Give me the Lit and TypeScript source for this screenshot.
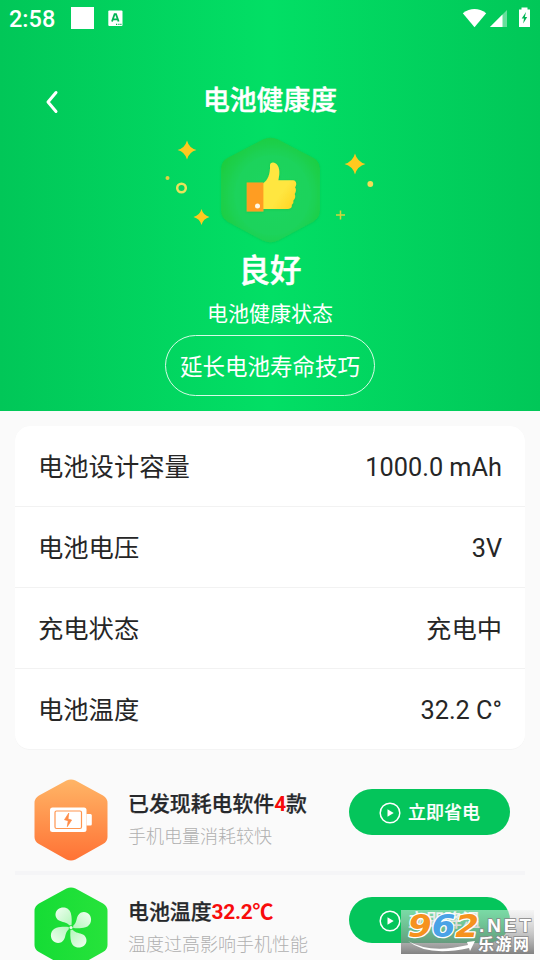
import { LitElement, html, css, svg } from "lit";
import { customElement, property } from "lit/decorators.js";

const spark = (x: number, y: number, r: number) => {
  const k = r * 0.3;
  return svg`<path fill="#ffc91f" d="M${x} ${y - r}Q${x + k * 0.7} ${y - k * 0.7} ${x + r} ${y}Q${x + k * 0.7} ${y + k * 0.7} ${x} ${y + r}Q${x - k * 0.7} ${y + k * 0.7} ${x - r} ${y}Q${x - k * 0.7} ${y - k * 0.7} ${x} ${y - r}Z"/>`;
};

@customElement("status-bar")
class StatusBar extends LitElement {
  static styles = css`
    :host { display: flex; align-items: center; height: 36px; padding: 0 8px 0 9px; color: #fff; }
    .clock { font: 500 23.5px/36px Roboto, sans-serif; width: 62px; padding-top: 1px; box-sizing: border-box; height: 36px; }
    .square { width: 23px; height: 22px; background: #fff; }
    .app { margin-left: 14px; }
    .system { margin-left: auto; }
    svg { display: block; }
  `;
  render() {
    return html`
      <span class="clock">2:58</span>
      <span class="square"></span>
      <svg class="app" width="15" height="17" viewBox="0 0 15 17">
        <rect x="0.3" y="0.5" width="14.2" height="15.5" rx="1" fill="#fff"/>
        <path d="M4 11.5L6.6 4.2H8L10.6 11.5M5 9.4H9.6" fill="none" stroke="#02b455" stroke-width="1.8"/>
        <path d="M8 14.3h1.2M10.3 14.3h1.2M12.3 14.3h1.2" stroke="#02b455" stroke-width="1.2"/>
      </svg>
      <svg class="system" width="70" height="36" viewBox="462 0 70 36">
        <path d="M462.8 13.2Q474.500 4.800 486.200 13.200L474.500 27.200Z" fill="#fff"/>
        <path d="M507 10V27H490Z" fill="#fff" opacity=".4"/>
        <path d="M502.500 14.500V27H490Z" fill="#fff"/>
        <path d="M521.500 7.500h6v2h2.500v17.500h-11V9.500h2.500Z" fill="#fff"/>
        <path d="M526 12l-4.300 6.600h2.300l-.8 5 4-6.600h-2.300Z" fill="#02b455"/>
      </svg>`;
  }
}

@customElement("health-badge")
class HealthBadge extends LitElement {
  static styles = css`:host, svg { display: block; }`;
  render() {
    return html`
      <svg width="240" height="125" viewBox="150 125 240 125">
        <defs>
          <radialGradient id="hex" cx=".52" cy=".55" r=".58">
            <stop offset="0" stop-color="#1bd561"/>
            <stop offset=".65" stop-color="#1cd35b"/>
            <stop offset="1" stop-color="#1ccd3f"/>
          </radialGradient>
          <linearGradient id="hand" x1="0" y1="0" x2="1" y2="1">
            <stop offset=".6" stop-color="#ffe640"/>
            <stop offset="1" stop-color="#ffd21f"/>
          </linearGradient>
          <filter id="soft" x="-20%" y="-20%" width="140%" height="140%">
            <feDropShadow dx="0" dy="0.500" stdDeviation="1" flood-color="#08b83c" flood-opacity=".5"/>
          </filter>
        </defs>
        <path filter="url(#soft)" fill="url(#hex)" d="M263 139.500Q270.500 135.800 278 139.500L313.500 158Q319.800 161.500 319.800 168.500V210.500Q319.800 217.500 313.500 221.500L278 240.500Q270.500 244 263 240.500L227.500 221.500Q221.200 217.500 221.200 210.500V168.500Q221.200 161.500 227.500 158Z"/>
        <g filter="url(#soft)">
          <path fill="url(#hand)" d="M263 183.500C268 180 270.300 174 270 165.500C270 162.600 273 162 275.300 163.200C279.500 165.500 280.300 172 278.300 180.200H293Q296.300 180.500 296.200 184.200Q296 186.200 295 187.300Q297 190 294.700 194Q296.200 197.500 293.300 200.500Q294 203 291.800 204.800Q292.300 208.800 288 209H263Z"/>
          <rect x="246.700" y="182.500" width="16.700" height="29" fill="#ff9d22"/>
          <circle cx="257.500" cy="206" r="2.500" fill="#fff8e6"/>
        </g>
        ${spark(187, 150, 9.500)}${spark(201.500, 217, 8)}${spark(355, 164, 10.500)}
        <circle cx="167.500" cy="178" r="2" fill="#e4d040"/>
        <circle cx="181.500" cy="188" r="4.300" fill="none" stroke="#e9e35c" stroke-width="2.500"/>
        <circle cx="370.300" cy="184" r="2.900" fill="#f3dc58"/>
        <path d="M340.500 210.500v9M336 215h9" stroke="#d6d33c" stroke-width="1.500"/>
      </svg>`;
  }
}

@customElement("info-row")
class InfoRow extends LitElement {
  @property() label = "";
  @property() value = "";
  static styles = css`
    :host { display: flex; justify-content: space-between; align-items: center; height: 80px; padding: 3px 23px 0; box-sizing: border-box; color: #262626; font-size: 25.3px; line-height: 40px; }
  `;
  render() {
    return html`<span>${this.label}</span><span>${this.value}</span>`;
  }
}

@customElement("tip-row")
class TipRow extends LitElement {
  @property() kind = "";
  @property() before = "";
  @property() mark = "";
  @property() after = "";
  @property() note = "";
  @property() action = "";
  static styles = css`
    :host { display: flex; align-items: center; height: 108px; padding: 0 30px 0 34px; box-sizing: border-box; }
    svg { display: block; flex: none; }
    .text { margin-left: 20px; flex: 1; white-space: nowrap; }
    .title { font-size: 20.9px; line-height: 32px; font-weight: 500; color: #26282b; -webkit-text-stroke: 0.25px #26282b; }
    .mark { color: #f80b0b; font-weight: 700; letter-spacing: -0.25px; -webkit-text-stroke: 0; }
    .note { font-size: 18px; line-height: 32px; padding-top: 1px; color: #b0b0b0; font-weight: 300; }
    .action { display: flex; align-items: center; box-sizing: border-box; width: 161px; height: 46px; margin-bottom: 16px; padding: 1px 0 0 30px; gap: 7px; border-radius: 23px; border: 0; background: #04c55b; color: #fff; font: 500 18px/26px Roboto, "Noto Sans CJK SC", sans-serif; -webkit-text-stroke: 0.2px #fff; }
  `;
  private glyph() {
    return this.kind === "battery"
      ? svg`<rect x="16" y="28.500" width="36.500" height="24.500" rx="2.500" fill="#fff"/>
          <path d="M52.500 35h4q1.300 0 1.300 1.500v8.500q0 1.500-1.300 1.500h-4Z" fill="#fff"/>
          <rect x="21" y="32" width="26.500" height="17.500" rx="1.500" fill="none" stroke="#ff9650" stroke-width="1.200"/>
          <path d="M34.800 34l-4.300 6.700 3.700 1-.9 6 4.300-6.700-3.600-1Z" fill="#ff8b46" stroke="#ff8b46" stroke-width=".7"/>`
      : svg`${[0, 90, 180, 270].map(
          (a) => svg`<path transform="rotate(${a} 37 40.500)" fill="url(#blade)" d="M35.300 38.300C32 34.500 28.500 35.500 25 33.500C20.500 31 20.500 25 24 22.200C28 19 35 20 36.800 26C38 30.500 37.800 35 37.500 38.300Z"/>`
        )}<circle cx="37" cy="40.500" r="1.600" fill="#e5ffe8"/>`;
  }
  render() {
    const warm = this.kind === "battery";
    return html`
      <svg width="74" height="82" viewBox="0 0 74 82">
        <defs>
          <linearGradient id="bg" x1="0" y1="0" x2=${warm ? "0" : "1"} y2=${warm ? "1" : "0"}>
            <stop offset="0" stop-color=${warm ? "#ffb566" : "#15dc35"}/>
            <stop offset="1" stop-color=${warm ? "#ff7235" : "#27e33b"}/>
          </linearGradient>
          <linearGradient id="blade" x1="0" y1="0" x2="1" y2="1">
            <stop offset="0" stop-color="#f1fff2"/>
            <stop offset="1" stop-color="#b4f6bb"/>
          </linearGradient>
        </defs>
        <path fill="url(#bg)" d="M32.500 1.500Q37 -.5 41.500 1.500L69 16.500Q73.500 19 73.500 24V58Q73.500 62.500 69 65L41.500 80.500Q37 82.500 32.500 80.500L5 65Q.5 62.500 .5 58V24Q.5 19 5 16.500Z"/>
        ${this.glyph()}
      </svg>
      <div class="text">
        <div class="title">${this.before}<span class="mark">${this.mark}</span>${this.after}</div>
        <div class="note">${this.note}</div>
      </div>
      <button class="action">
        <svg width="22" height="22" viewBox="0 0 22 22">
          <circle cx="11" cy="11" r="9.800" fill="none" stroke="#fff" stroke-width="1.500"/>
          <path d="M8.500 7.300L14.700 11L8.500 14.700Z" fill="#fff"/>
        </svg>
        <span>${this.action}</span>
      </button>`;
  }
}

@customElement("site-mark")
class SiteMark extends LitElement {
  static styles = css`
    :host, svg { display: block; }
    .num { font: italic 700 32px "DejaVu Sans", "Liberation Sans", sans-serif; paint-order: stroke; stroke: #fff; stroke-width: 2.5px; stroke-linejoin: round; }
    .net { font: 700 19px "Liberation Sans", sans-serif; fill: #fff; paint-order: stroke; stroke: #888; stroke-width: 1.5px; }
    .cn { font: 700 16px "Noto Sans CJK SC", sans-serif; fill: #fff; paint-order: stroke; stroke: #888; stroke-width: 1.5px; }
  `;
  render() {
    return html`
      <svg width="133" height="44" viewBox="401 910 133 44">
        <defs>
          <linearGradient id="shade" x1="0" y1="0" x2="0" y2="1">
            <stop offset="0" stop-color="#f0f0f0" stop-opacity=".5"/>
            <stop offset=".5" stop-color="#aaa" stop-opacity=".6"/>
            <stop offset="1" stop-color="#6c6c6c" stop-opacity=".85"/>
          </linearGradient>
        </defs>
        <rect x="401" y="910" width="133" height="44" fill="url(#shade)"/>
        <text class="num" x="408" y="937" textLength="71" lengthAdjust="spacingAndGlyphs"><tspan fill="#f6921e">9</tspan><tspan fill="#4aa3e6">6</tspan><tspan fill="#f6921e">2</tspan></text>
        <path d="M408 941Q430 954 468 945L467 942L475 941L470 951L469 948Q428 957 408 941Z" fill="#fff"/>
        <text class="net" x="479" y="931.500" textLength="52" lengthAdjust="spacing">.NET</text>
        <text class="cn" x="478" y="949.500" textLength="51" lengthAdjust="spacing">乐游网</text>
      </svg>`;
  }
}

@customElement("app-root")
class AppRoot extends LitElement {
  static styles = css`
    :host { display: block; position: relative; height: 960px; overflow: hidden; background: #fafafa; font-family: Roboto, "Noto Sans CJK SC", sans-serif; }
    .hero { height: 411px; box-sizing: border-box; background: linear-gradient(90deg, #01c758, #02df65 50%, #01c758); color: #fff; display: flex; flex-direction: column; align-items: center; }
    status-bar { align-self: stretch; }
    .bar { align-self: stretch; display: grid; grid-template-columns: 104px 1fr 104px; align-items: center; height: 40px; margin-top: 44px; }
    .bar svg { display: block; margin: 3px 0 0 44px; }
    .title { margin: 0; padding-top: 1px; text-align: center; font-size: 26.8px; line-height: 40px; font-weight: 500; -webkit-text-stroke: 0.4px #fff; }
    health-badge { margin-top: 5px; }
    .grade { font-size: 31.5px; line-height: 40px; font-weight: 500; padding-top: 2px; -webkit-text-stroke: 0.5px #fff; }
    .state { font-size: 21px; line-height: 30px; margin-top: 7px; }
    .tips { box-sizing: border-box; width: 210px; height: 61px; margin-top: 6px; border: 1px solid #d7fbe5; border-radius: 31px; background: none; color: #fff; font: 400 22.500px/40px Roboto, "Noto Sans CJK SC", sans-serif; padding: 2px 0 0; }
    .card { display: grid; gap: 1px; margin: 15px 15px 0; border-radius: 15px; overflow: hidden; background: #f2f2f2; border-bottom: 1px solid #f4f4f4; }
    info-row { background: #fff; }
    .list { margin-top: 16px; }
    .rule { height: 4px; margin: -3px 15px -1px; background: #f5f5f7; }
    site-mark { position: absolute; left: 401px; top: 910px; }
  `;
  render() {
    return html`
      <section class="hero">
        <status-bar></status-bar>
        <div class="bar">
          <svg width="16" height="24" viewBox="0 0 16 24"><path d="M12 2.500L4 12L12 21.500" fill="none" stroke="#fff" stroke-width="3" stroke-linecap="round" stroke-linejoin="round"/></svg>
          <h1 class="title">电池健康度</h1>
        </div>
        <health-badge></health-badge>
        <div class="grade">良好</div>
        <div class="state">电池健康状态</div>
        <button class="tips">延长电池寿命技巧</button>
      </section>
      <section class="card">
        <info-row label="电池设计容量" value="1000.0 mAh"></info-row>
        <info-row label="电池电压" value="3V"></info-row>
        <info-row label="充电状态" value="充电中"></info-row>
        <info-row label="电池温度" value="32.2 C°"></info-row>
      </section>
      <section class="list">
        <tip-row kind="battery" before="已发现耗电软件" mark="4" after="款" note="手机电量消耗较快" action="立即省电"></tip-row>
        <div class="rule"></div>
        <tip-row kind="fan" before="电池温度" mark="32.2℃" note="温度过高影响手机性能" action="立即降温"></tip-row>
      </section>
      <site-mark></site-mark>`;
  }
}
